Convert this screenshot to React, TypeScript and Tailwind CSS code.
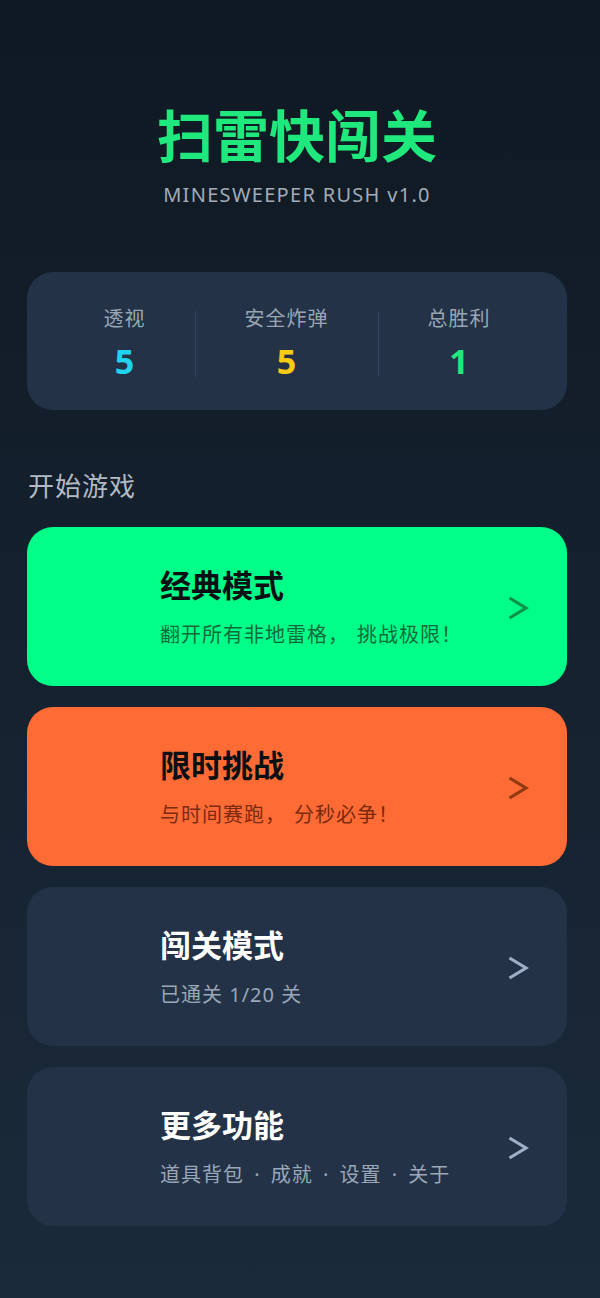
import React from "react";

const FONT = { fontFamily: '"Noto Sans", "Noto Sans CJK SC", sans-serif' };

type Mode = {
  title: string;
  desc: React.ReactNode;
  bg: string;
  titleColor: string;
  descColor: string;
  chevColor: string;
};

const Dot = () => <span className="mx-[4px]">·</span>;
const Comma = () => <span className="mr-[8px]">，</span>;

const modes: Mode[] = [
  {
    title: "经典模式",
    desc: (
      <>
        翻开所有非地雷格<Comma />挑战极限！
      </>
    ),
    bg: "bg-[#00ff88]",
    titleColor: "text-[#0a0f14]",
    descColor: "text-[#0d6b3a]",
    chevColor: "text-[#119049]",
  },
  {
    title: "限时挑战",
    desc: (
      <>
        与时间赛跑<Comma />分秒必争！
      </>
    ),
    bg: "bg-[#ff6b35]",
    titleColor: "text-[#0a0f14]",
    descColor: "text-[#7a2a0e]",
    chevColor: "text-[#8f3812]",
  },
  {
    title: "闯关模式",
    desc: "已通关 1/20 关",
    bg: "bg-[#233246]",
    titleColor: "text-white",
    descColor: "text-[#9aa7b8]",
    chevColor: "text-[#9fb0c6]",
  },
  {
    title: "更多功能",
    desc: (
      <>
        道具背包 <Dot /> 成就 <Dot /> 设置 <Dot /> 关于
      </>
    ),
    bg: "bg-[#233246]",
    titleColor: "text-white",
    descColor: "text-[#9aa7b8]",
    chevColor: "text-[#9fb0c6]",
  },
];

function Stat({ label, value, color }: { label: string; value: string; color: string }) {
  return (
    <div className="flex flex-col items-center px-[49px]">
      <div className="text-[20px] leading-[26px] tracking-[1px] text-[#9aa5b4]">{label}</div>
      <div className={`mt-[9px] text-[34px] font-bold leading-[40px] ${color}`}>{value}</div>
    </div>
  );
}

function Chevron({ className }: { className: string }) {
  return (
    <svg width="22" height="26" viewBox="0 0 22 26" className={className} fill="none">
      <polyline points="2.5,3 19,13 2.5,23" stroke="currentColor" strokeWidth="3.2" strokeLinejoin="miter" />
    </svg>
  );
}

export default function App() {
  return (
    <div
      className="min-h-[1298px] w-full bg-gradient-to-b from-[#0f1923] to-[#1b2a3b] pl-[27px] pr-[33px] pb-[73px]"
      style={FONT}
    >
      <div className="flex flex-col items-center pt-[100px]">
        <h1 className="text-[56px] font-bold leading-[70px] text-[#1fe87c]">扫雷快闯关</h1>
        <div className="mt-[12px] text-[20px] leading-[26px] tracking-[1.3px] text-[#a3abb6]">
          MINESWEEPER RUSH v1.0
        </div>
      </div>

      <div className="mt-[64px] flex h-[138px] items-center justify-center rounded-[26px] bg-[#233246] pt-[5px]">
        <Stat label="透视" value="5" color="text-[#22d3ee]" />
        <div className="h-[66px] w-px bg-[#34445a]" />
        <Stat label="安全炸弹" value="5" color="text-[#facc15]" />
        <div className="h-[66px] w-px bg-[#34445a]" />
        <Stat label="总胜利" value="1" color="text-[#1fe87c]" />
      </div>

      <div className="mt-[59px] pl-px text-[26px] leading-[34px] tracking-[1px] text-[#b3bac4]">开始游戏</div>

      <div className="mt-[24px] flex flex-col gap-[21px]">
        {modes.map((m) => (
          <div
            key={m.title}
            className={`flex h-[159px] items-center rounded-[26px] pl-[133px] pr-[38px] ${m.bg}`}
          >
            <div className="flex flex-1 flex-col">
              <div className={`text-[31px] font-bold leading-[40px] ${m.titleColor}`}>{m.title}</div>
              <div className={`mt-[17px] text-[20px] leading-[26px] tracking-[1px] ${m.descColor}`}>
                {m.desc}
              </div>
            </div>
            <Chevron className={`mt-[3px] ${m.chevColor}`} />
          </div>
        ))}
      </div>
    </div>
  );
}
